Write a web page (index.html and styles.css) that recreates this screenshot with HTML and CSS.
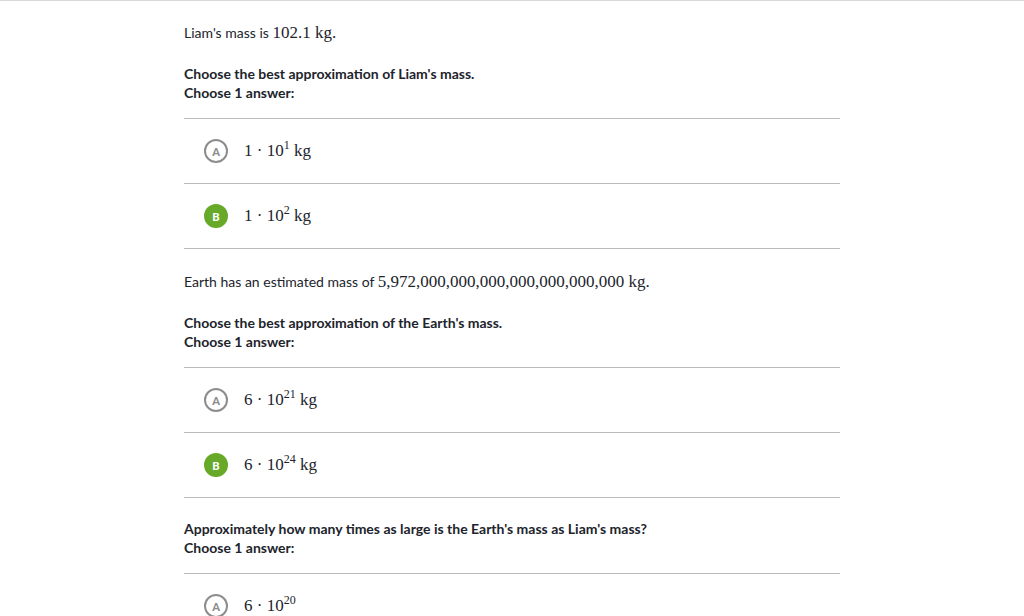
FILE: index.html
```html
<!DOCTYPE html>
<html>
<head>
<meta charset="utf-8">
<link rel="stylesheet" href="styles.css">
</head>
<body>
<main class="page">
  <section class="item first">
    <p class="para">Liam's mass is <span class="m">102.1 kg</span><span class="m">.</span></p>
    <div class="q">
      <div>Choose the best approximation of Liam's mass.</div>
      <div>Choose 1 answer:</div>
    </div>
    <ul class="choices">
      <li class="choice"><span class="bubble">A</span><span class="m">1 · 10<sup>1</sup> kg</span></li>
      <li class="choice"><span class="bubble sel">B</span><span class="m">1 · 10<sup>2</sup> kg</span></li>
    </ul>
  </section>
  <section class="item second">
    <p class="para">Earth has an estimated mass of <span class="m">5,972,000,000,000,000,000,000,000 kg</span><span class="m">.</span></p>
    <div class="q">
      <div>Choose the best approximation of the Earth's mass.</div>
      <div>Choose 1 answer:</div>
    </div>
    <ul class="choices">
      <li class="choice"><span class="bubble">A</span><span class="m">6 · 10<sup>21</sup> kg</span></li>
      <li class="choice"><span class="bubble sel">B</span><span class="m">6 · 10<sup>24</sup> kg</span></li>
    </ul>
  </section>
  <section class="item third">
    <div class="q">
      <div>Approximately how many times as large is the Earth's mass as Liam's mass?</div>
      <div>Choose 1 answer:</div>
    </div>
    <ul class="choices">
      <li class="choice"><span class="bubble">A</span><span class="m">6 · 10<sup>20</sup></span></li>
    </ul>
  </section>
</main>
</body>
</html>
```

FILE: styles.css
```css
html, body {
  margin: 0;
  padding: 0;
  background: #fff;
}
body {
  font-family: Lato, "Liberation Sans", sans-serif;
  font-size: 14px;
  color: #21242c;
  border-top: 1px solid #d8d8d8;
  overflow: hidden;
  height: 615px;
}
.page {
  width: 656px;
  margin-left: 184px;
}
.item {
  display: flex;
  flex-direction: column;
}
.first { padding-top: 22px; }
.second { padding-top: 23px; }
.third { padding-top: 21px; }
.para {
  margin: 0 0 21px 0;
  line-height: 20px;
  height: 20px;
}
.m {
  font-family: "Liberation Serif", "DejaVu Serif", serif;
  font-size: 17px;
  line-height: 20px;
}
.m sup {
  font-size: 12px;
  line-height: 0;
  vertical-align: 7px;
}
.q {
  font-weight: 700;
  line-height: 19px;
  margin-bottom: 16px;
}
.choices {
  list-style: none;
  margin: 0;
  padding: 0;
  border-bottom: 1px solid #bcbcbc;
}
.third .choices { border-bottom: none; }
.choice {
  display: flex;
  align-items: center;
  gap: 16px;
  height: 64px;
  padding-left: 20px;
  border-top: 1px solid #bcbcbc;
}
.bubble {
  box-sizing: border-box;
  width: 24px;
  height: 24px;
  border-radius: 50%;
  border: 2px solid #8d8d8d;
  color: #8d8d8d;
  font-size: 11px;
  font-weight: 900;
  display: flex;
  align-items: center;
  justify-content: center;
  flex: none;
}
.bubble.sel {
  background: #67a928;
  border-color: #67a928;
  color: #fff;
}
```
